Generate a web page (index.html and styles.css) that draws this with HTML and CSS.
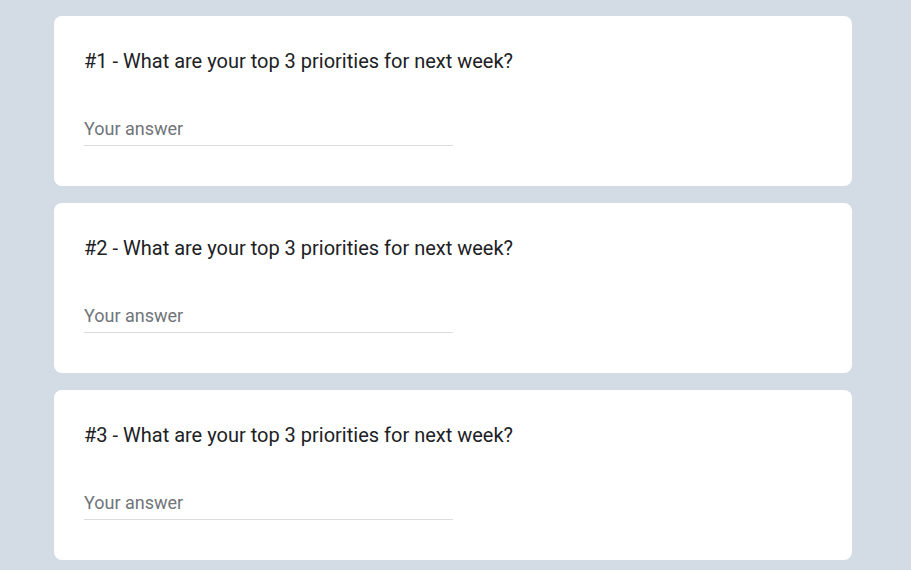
FILE: index.html
```html
<!DOCTYPE html>
<html lang="en">
<head>
<meta charset="utf-8">
<title>Weekly priorities</title>
<link rel="stylesheet" href="styles.css">
</head>
<body>
<main class="form">
  <section class="card">
    <h2 class="question">#1 - What are your top 3 priorities for next week?</h2>
    <input class="answer" type="text" placeholder="Your answer">
  </section>
  <section class="card">
    <h2 class="question">#2 - What are your top 3 priorities for next week?</h2>
    <input class="answer" type="text" placeholder="Your answer">
  </section>
  <section class="card">
    <h2 class="question">#3 - What are your top 3 priorities for next week?</h2>
    <input class="answer" type="text" placeholder="Your answer">
  </section>
</main>
</body>
</html>
```

FILE: styles.css
```css
html, body {
  margin: 0;
  padding: 0;
}
body {
  background: #d3dce4;
  font-family: Roboto, "Liberation Sans", Arial, sans-serif;
  color: #202124;
}
.form {
  width: 798px;
  margin-left: 54px;
  padding-top: 16px;
  display: flex;
  flex-direction: column;
  gap: 17px;
}
.card {
  background: #ffffff;
  border-radius: 8px;
  height: 170px;
  box-sizing: border-box;
  padding: 33px 30px 0;
  display: flex;
  flex-direction: column;
}
.question {
  margin: 0;
  font-size: 20px;
  font-weight: 400;
  line-height: 24px;
  color: #202124;
}
.answer {
  margin-top: 46px;
  width: 369px;
  box-sizing: border-box;
  border: none;
  border-bottom: 1px solid #dadce0;
  padding: 0 0 6px;
  font-family: Roboto, "Liberation Sans", Arial, sans-serif;
  font-size: 18px;
  line-height: 20px;
  color: #202124;
  outline: none;
  background: transparent;
}
.answer::placeholder {
  color: #70757a;
  opacity: 1;
}
```
